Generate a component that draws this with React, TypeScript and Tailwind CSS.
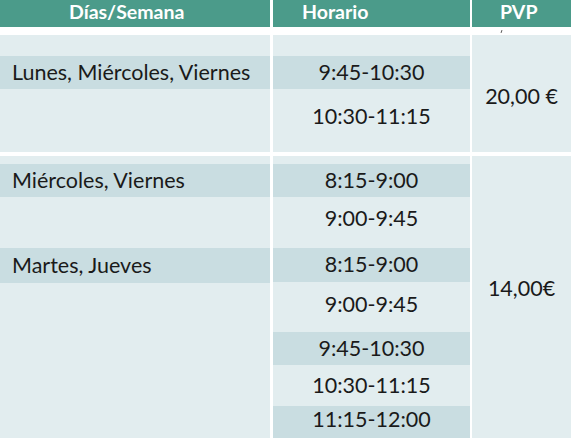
type Seg = { h: number; dark?: boolean; text?: string; align?: "left" | "center" };

function Cell({ seg }: { seg: Seg }) {
  return (
    <div
      className={
        "flex items-center " +
        (seg.dark ? "bg-[#c9dde1] " : "bg-[#e2edef] ") +
        (seg.align === "left" ? "justify-start pl-3" : "justify-center")
      }
      style={{ height: seg.h }}
    >
      {seg.text}
    </div>
  );
}

function Column({ segs, className }: { segs: Seg[]; className: string }) {
  return (
    <div className={"flex flex-col " + className}>
      {segs.map((s, i) => (
        <Cell key={i} seg={s} />
      ))}
    </div>
  );
}

const dias1: Seg[] = [
  { h: 21 },
  { h: 33, dark: true, text: "Lunes, Miércoles, Viernes", align: "left" },
  { h: 63 },
];
const horario1: Seg[] = [
  { h: 21 },
  { h: 33, dark: true, text: "9:45-10:30" },
  { h: 56, text: "10:30-11:15" },
  { h: 7 },
];

const dias2: Seg[] = [
  { h: 8 },
  { h: 33, dark: true, text: "Miércoles, Viernes", align: "left" },
  { h: 51 },
  { h: 35, dark: true, text: "Martes, Jueves", align: "left" },
  { h: 170 },
];
const horario2: Seg[] = [
  { h: 8 },
  { h: 33, dark: true, text: "8:15-9:00" },
  { h: 44, text: "9:00-9:45" },
  { h: 7 },
  { h: 34, dark: true, text: "8:15-9:00" },
  { h: 46, text: "9:00-9:45" },
  { h: 4 },
  { h: 33, dark: true, text: "9:45-10:30" },
  { h: 41, text: "10:30-11:15" },
  { h: 28, dark: true, text: "11:15-12:00" },
  { h: 20, dark: true },
];

export default function App() {
  return (
    <div
      className="h-[438px] w-[574px] overflow-hidden bg-white text-[21.5px] leading-none text-[#1a1a1a]"
      style={{ fontFamily: "Lato, 'Open Sans', sans-serif" }}
    >
      {/* Header */}
      <div className="flex h-[27px] text-[19.5px] font-bold text-white">
        <div className="flex w-[270px] items-center bg-[#4b9b8a] pb-[4px] pl-[69px]">Días/Semana</div>
        <div className="ml-[3px] flex w-[197px] items-center bg-[#4b9b8a] pb-[4px] pl-[29px]">Horario</div>
        <div className="ml-[2px] flex w-[99px] items-center bg-[#4b9b8a] pb-[4px] pl-[28px]">PVP</div>
      </div>

      {/* Section 1 */}
      <div className="relative mt-[8px] flex">
        <span className="absolute left-[501px] top-[-5px] h-[3px] w-px rotate-[20deg] bg-[#555]" />
        <Column segs={dias1} className="w-[270px]" />
        <Column segs={horario1} className="ml-[3px] w-[197px]" />
        <div className="ml-[2px] flex w-[99px] justify-center bg-[#e2edef] pt-[51px]">20,00 €</div>
      </div>

      {/* Section 2 */}
      <div className="mt-[4px] flex">
        <Column segs={dias2} className="w-[270px]" />
        <Column segs={horario2} className="ml-[3px] w-[197px]" />
        <div className="ml-[2px] flex w-[99px] justify-center bg-[#e2edef] pt-[122px]">14,00€</div>
      </div>
    </div>
  );
}
